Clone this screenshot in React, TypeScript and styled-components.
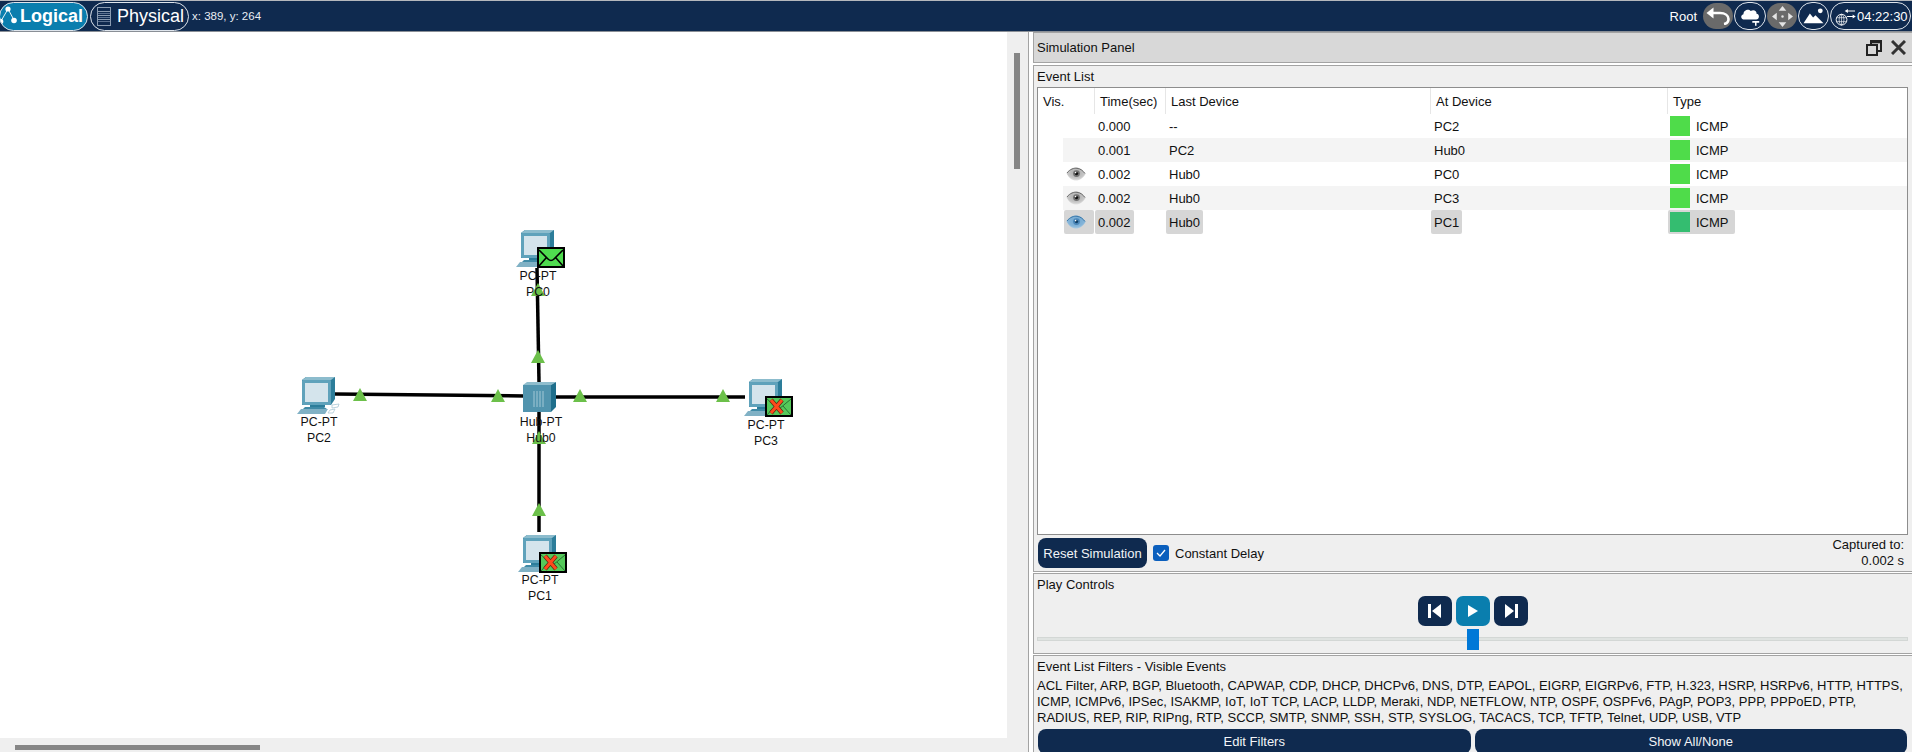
import React from 'react';
import styled, { createGlobalStyle } from 'styled-components';

const navy = '#0f2a4f';
const edge = '#a3a3a3';

const GlobalStyle = createGlobalStyle`
  html, body {
    margin: 0;
    padding: 0;
    background: #fff;
    overflow: hidden;
  }
  * { box-sizing: border-box; }
`;

const Page = styled.div`
  width: 1912px;
  height: 752px;
  display: flex;
  flex-direction: column;
  overflow: hidden;
  font-family: "Liberation Sans", Arial, sans-serif;
  font-size: 13px;
  color: #111;
`;

/* top bar */
const TopBar = styled.header`
  height: 32px;
  flex: none;
  display: flex;
  align-items: center;
  background: ${navy};
  border-top: 1px solid #b5b8bd;
  border-bottom: 1px solid #8a8f96;
  color: #fff;
`;

const ModeTab = styled.div<{ $active?: boolean }>`
  height: 29px;
  display: flex;
  align-items: center;
  border: 1px solid #dfe5ec;
  border-radius: 15px;
  font-size: 18px;
  font-weight: ${p => (p.$active ? 700 : 400)};
  background: ${p => (p.$active ? '#0a7eae' : 'transparent')};
  width: ${p => (p.$active ? '89px' : '99px')};
  margin-left: ${p => (p.$active ? '-1px' : '2px')};
  padding-left: ${p => (p.$active ? '0' : '6px')};
  gap: ${p => (p.$active ? '0' : '6px')};
  overflow: hidden;
`;

const Coords = styled.span`
  margin-left: 3px;
  font-size: 11.5px;
  color: #e8edf3;
`;

const TopRight = styled.div`
  margin-left: auto;
  display: flex;
  align-items: center;
  gap: 1px;
  padding-right: 1px;
`;

const RootLabel = styled.span`
  font-size: 13px;
  margin-right: 5px;
`;

const RoundButton = styled.div<{ $filled?: boolean; $w: number }>`
  width: ${p => p.$w}px;
  height: ${p => (p.$filled ? 26 : 28)}px;
  display: flex;
  align-items: center;
  justify-content: center;
  border-radius: 14px;
  background: ${p => (p.$filled ? '#6a6a6a' : 'transparent')};
  border: ${p => (p.$filled ? 'none' : '1px solid #dfe5ec')};
`;

const ClockButton = styled(RoundButton)`
  justify-content: flex-start;
  padding-left: 4px;
  gap: 1px;
  font-size: 13px;
`;

/* workspace */
const Main = styled.div`
  flex: 1;
  min-height: 0;
  display: flex;
`;

const LeftPane = styled.section`
  width: 1028px;
  flex: none;
  display: flex;
  flex-direction: column;
`;

const CanvasRow = styled.div`
  flex: 1;
  min-height: 0;
  display: flex;
`;

const Canvas = styled.div`
  position: relative;
  width: 1007px;
  flex: none;
  background: #fff;
`;

const Wires = styled.svg`
  position: absolute;
  left: 0;
  top: 0;
`;

const VScroll = styled.div`
  flex: 1;
  background: #efefef;
  padding: 21px 0 0 7px;
`;

const VThumb = styled.div`
  width: 6px;
  height: 116px;
  background: #868686;
`;

const HScroll = styled.div`
  height: 14px;
  flex: none;
  background: #efefef;
  padding: 7px 0 0 15px;
`;

const HThumb = styled.div`
  width: 245px;
  height: 5px;
  background: #868686;
`;

const Device = styled.div<{ $x: number; $y: number }>`
  position: absolute;
  left: ${p => p.$x - 50}px;
  top: ${p => p.$y}px;
  width: 100px;
  display: flex;
  flex-direction: column;
  align-items: center;
  font-size: 12.3px;
  line-height: 16px;
`;

const DeviceText = styled.span<{ $gap?: number }>`
  position: relative;
  margin-top: ${p => p.$gap ?? 0}px;
  color: #111;
`;

const EnvelopeSlot = styled.div`
  position: absolute;
  left: 49px;
  top: 17px;
  width: 28px;
  height: 21px;
`;

const HubDrawing = styled.svg`
  margin-right: 3px;
`;

/* simulation panel */
const Panel = styled.aside`
  flex: 1;
  display: flex;
  flex-direction: column;
  border-left: 1px solid ${edge};
  padding-left: 4px;
  background: #fff;
`;

const PanelHeader = styled.div`
  height: 31px;
  flex: none;
  display: flex;
  align-items: center;
  padding: 0 6px 0 3px;
  margin-bottom: 2px;
  background: #d8d8d8;
  border: 1px solid ${edge};
  border-right: none;
`;

const PanelTitle = styled.span`
  font-size: 13px;
  margin-right: auto;
`;

const HeaderIcons = styled.div`
  display: flex;
  align-items: center;
  gap: 9px;
`;

const Section = styled.div<{ $h: number }>`
  height: ${p => p.$h}px;
  flex: none;
  display: flex;
  flex-direction: column;
  margin-bottom: 1px;
  background: #efefef;
  border: 1px solid ${edge};
  border-right: none;
`;

const SectionLabel = styled.div`
  height: 21px;
  flex: none;
  display: flex;
  align-items: center;
  padding-left: 3px;
  line-height: 16px;
`;

const TableBox = styled.div`
  height: 448px;
  flex: none;
  margin: 0 4px 0 3px;
  background: #fff;
  border: 1px solid #8d8d8d;
`;

const TableHead = styled.div`
  height: 26px;
  display: grid;
  grid-template-columns: 56px 71px 265px 237px 1fr;
`;

const HeadCell = styled.div<{ $first?: boolean }>`
  display: flex;
  align-items: center;
  padding-left: 5px;
  border-left: ${p => (p.$first ? 'none' : '1px solid #e6e6e6')};
`;

const Row = styled.div<{ $alt?: boolean }>`
  height: 24px;
  margin-left: 25px;
  display: grid;
  grid-template-columns: 31px 71px 265px 237px 1fr;
  background: ${p => (p.$alt ? '#f4f4f4' : 'transparent')};
`;

const Cell = styled.div`
  display: flex;
  align-items: center;
`;

const CellPill = styled.span<{ $on?: boolean }>`
  height: 24px;
  display: inline-flex;
  align-items: center;
  margin-left: 1px;
  padding: 0 3px;
  border-radius: 2px;
  background: ${p => (p.$on ? '#d6d6d6' : 'transparent')};
`;

const EyePill = styled(CellPill)`
  width: 30px;
  padding: 0 0 0 2px;
`;

const Swatch = styled.span<{ $on?: boolean }>`
  width: 20px;
  height: 20px;
  margin: 0 6px 0 -1px;
  background: ${p => (p.$on ? '#34bd70' : '#4fdc4a')};
`;

const EventFooter = styled.div`
  flex: 1;
  display: flex;
  align-items: center;
  padding: 0 8px 0 4px;
`;

const NavyButton = styled.button<{ $grow?: boolean }>`
  height: ${p => (p.$grow ? '25px' : '30px')};
  flex: ${p => (p.$grow ? '1' : 'none')};
  width: ${p => (p.$grow ? 'auto' : '109px')};
  padding: 0;
  border: none;
  border-radius: 8px;
  background: ${navy};
  color: #f2f4f7;
  font-family: inherit;
  font-size: 13px;
`;

const CheckBox = styled.span`
  width: 16px;
  height: 16px;
  margin: 0 6px;
  display: inline-flex;
  align-items: center;
  justify-content: center;
  border-radius: 3px;
  background: #0b5fbd;
`;

const Captured = styled.div`
  margin-left: auto;
  text-align: right;
  line-height: 16px;
`;

const PlayRow = styled.div`
  display: flex;
  justify-content: center;
  gap: 4px;
  margin-top: 1px;
`;

const PlayButton = styled.div<{ $active?: boolean }>`
  width: 34px;
  height: 30px;
  display: flex;
  align-items: center;
  justify-content: center;
  border-radius: 7px;
  background: ${p => (p.$active ? '#0a7eae' : navy)};
`;

const SliderTrack = styled.div`
  position: relative;
  height: 4px;
  margin: 11px 4px 0 3px;
  background: #dfe3e1;
  border: 1px solid #d3d7d5;
`;

const SliderThumb = styled.div`
  position: absolute;
  left: calc(50% - 6px);
  top: -9px;
  width: 12px;
  height: 21px;
  background: #0078d7;
`;

const FilterText = styled.div`
  line-height: 16px;
  padding: 1px 0 0 3px;
  white-space: nowrap;
`;

const FilterButtons = styled.div`
  display: flex;
  gap: 4px;
  padding: 3px 5px 0 4px;
`;

/* drawings */
const PcIcon = () => (
  <svg width="44" height="37" viewBox="0 0 44 37">
    <path d="M5 3 L9 0 H38 V22 L34 28 H5 Z" fill="#2c7d9a" />
    <path d="M5 3 L9 0 H38 L34 3 Z" fill="#8cbccd" />
    <rect x="5" y="3" width="29" height="25" rx="1" fill="#5fa2bb" />
    <rect x="8" y="6" width="23" height="19" fill="#d4e4ec" />
    <rect x="13" y="28" width="15" height="2" fill="#2c7d9a" />
    <path d="M6 32 H30 L27 30 H8 Z" fill="#3f8aa6" />
    <path d="M0 37 L4 32 H31 L28 37 Z" fill="#80b1c5" />
    <path d="M35 28 L42 27 L41 30 L35 31 Z M33 33 L38 32 L36 36 L31 36 Z" fill="none" stroke="#a9c8d5" strokeWidth="0.8" />
  </svg>
);

const HubIcon = () => (
  <HubDrawing width="33" height="30" viewBox="0 0 33 30">
    <path d="M0 3 L4 0 H33 L28 3 Z" fill="#8fbdcd" />
    <path d="M28 3 L33 0 V25 L28 30 Z" fill="#1f6f8c" />
    <rect y="3" width="28" height="27" fill="#5194ae" />
    <path d="M11 9 V25 M14 9 V25 M17 9 V25 M20 9 V25" stroke="#a3c8d6" strokeWidth="1" />
  </HubDrawing>
);

const Envelope = ({ failed }: { failed?: boolean }) => (
  <svg width="28" height="21" viewBox="0 0 28 21">
    <rect x="1" y="1" width="26" height="19" fill={failed ? '#55c95a' : '#4fdc4f'} stroke="#000" strokeWidth="2" />
    {failed ? (
      <>
        <path d="M2 3 L14 13 L26 3 M2 19 L10 10 M26 19 L18 10" fill="none" stroke="#1d5b27" strokeWidth="0.8" />
        <path d="M6 4 L17 17 M17 4 L6 17" stroke="#5b2b14" strokeWidth="4.4" />
        <path d="M6 4 L17 17 M17 4 L6 17" stroke="#ff4a1c" strokeWidth="3" />
      </>
    ) : (
      <path d="M2 3 L11 12 Q14 15 17 12 L26 3 M2 19 L9 11 M26 19 L19 11" fill="none" stroke="#000" strokeWidth="1.6" />
    )}
  </svg>
);

const Eye = ({ blue }: { blue?: boolean }) => {
  const id = blue ? 'eyeBlue' : 'eyeGray';
  return (
    <svg width="20" height="14" viewBox="0 0 20 14">
      <defs>
        <radialGradient id={id} cx="0.5" cy="0.4" r="0.65">
          <stop offset="0" stopColor={blue ? '#6da5d0' : '#a8a8a8'} />
          <stop offset="0.65" stopColor={blue ? '#84b4d8' : '#c6c6c6'} />
          <stop offset="1" stopColor={blue ? '#b7d3e8' : '#ececec'} />
        </radialGradient>
      </defs>
      <path d="M0.5 6.5 C4 1.5 7 0.5 10 0.5 C14 0.5 17 3 19.5 7 C17 11 14 13.5 10 13.5 C6 13.5 3 11 0.5 6.5 Z" fill={`url(#${id})`} />
      <path d="M1 6 C4 2 8 1 11 1.3 C15 1.8 17 4 19 6.5" fill="none" stroke={blue ? '#3a77a8' : '#6a6a6a'} strokeWidth="1" />
      <circle cx="10.5" cy="6.6" r="3.4" fill={blue ? '#4a86b8' : '#717171'} />
      <circle cx="10.5" cy="6.6" r="1.7" fill={blue ? '#123f66' : '#111'} />
      <circle cx="9.6" cy="5.6" r="0.8" fill="#fff" />
    </svg>
  );
};

const LogicalIcon = () => (
  <svg width="20" height="22" viewBox="0 0 20 22" fill="#fff" stroke="#fff">
    <path d="M8 4 L1 16 M8 4 L14 15" fill="none" strokeWidth="0.9" />
    <circle cx="8" cy="4" r="2.6" stroke="none" />
    <circle cx="0.5" cy="16.5" r="2.8" stroke="none" />
    <circle cx="14" cy="15.5" r="2.8" stroke="none" />
  </svg>
);

const PhysicalIcon = () => (
  <svg width="14" height="19" viewBox="0 0 14 19" fill="none" stroke="#8b9cb1">
    <rect x="0.5" y="0.5" width="13" height="18" />
    <path d="M1 4.5 H13 M1 8.5 H13 M1 12.5 H13" />
    <path d="M1 6.5 H13 M1 10.5 H13 M1 14.5 H13" stroke="#5b7190" />
  </svg>
);

const UndoIcon = () => (
  <svg width="24" height="18" viewBox="0 0 24 18" fill="none" stroke="#fff" strokeWidth="2.6">
    <path d="M5 6 H14 C19 6 22.5 8.5 22.5 12 C22.5 14.5 21 16.5 18 17" />
    <path d="M0.5 6 L7.5 0.5 V11.5 Z" fill="#fff" stroke="none" />
  </svg>
);

const CloudIcon = () => (
  <svg width="20" height="19" viewBox="0 0 26 24" fill="#fff">
    <path d="M6 16 C1 16 0 10 4.5 9 C4.5 4 11 1.5 14 5 C17 2.5 22 4 21.5 8.5 C26 9 25.5 16 21 16 Z" />
    <path d="M16 18 H25 V20 H21.5 V24 H19.5 V20 H16 Z" />
  </svg>
);

const MoveIcon = () => (
  <svg width="21" height="21" viewBox="0 0 22 22" fill="#e4e4e4">
    <path d="M11 0 L15 5 H7 Z M11 22 L15 17 H7 Z M0 11 L5 7 V15 Z M22 11 L17 7 V15 Z" />
    <circle cx="11" cy="11" r="1.3" />
  </svg>
);

const PictureIcon = () => (
  <svg width="21" height="16" viewBox="0 0 25 20" fill="#fff">
    <path d="M0 19 L8 7 L12 12 L15 9 L25 19 Z" />
    <circle cx="21" cy="3.5" r="3" />
  </svg>
);

const GlobeIcon = () => (
  <svg width="21" height="19" viewBox="0 0 26 24" fill="none" stroke="#fff">
    <circle cx="8" cy="16" r="6.8" strokeWidth="1.2" />
    <ellipse cx="8" cy="16" rx="3" ry="6.8" strokeWidth="0.8" />
    <path d="M1.5 13.5 H14.5 M1.5 18.5 H14.5 M8 9 V23" strokeWidth="0.8" />
    <path d="M15 5 H25 M15 12 H24" strokeWidth="1.4" />
    <path d="M12 5 L16 2.5 V7.5 Z M26 12 L22 9.5 V14.5 Z" fill="#fff" stroke="none" />
  </svg>
);

const RestoreIcon = () => (
  <svg width="16" height="16" viewBox="0 0 16 16" fill="none" stroke="#222" strokeWidth="2">
    <rect x="1" y="5" width="10" height="10" />
    <path d="M5 4 V1 H15 V11 H12" />
    <path d="M5 2.5 H15" strokeWidth="1.6" />
  </svg>
);

const CloseIcon = () => (
  <svg width="15" height="15" viewBox="0 0 15 15" stroke="#333" strokeWidth="3">
    <path d="M1 1 L14 14 M14 1 L1 14" />
  </svg>
);

const SkipBack = () => (
  <svg width="16" height="16" viewBox="0 0 16 16" fill="#fff">
    <rect x="1" y="1" width="3" height="14" />
    <path d="M14 1 V15 L5 8 Z" />
  </svg>
);

const PlayGlyph = () => (
  <svg width="10" height="12" viewBox="0 0 10 12" fill="#fff">
    <path d="M0 0 L10 6 L0 12 Z" />
  </svg>
);

const SkipForward = () => (
  <svg width="16" height="16" viewBox="0 0 16 16" fill="#fff">
    <rect x="12" y="1" width="3" height="14" />
    <path d="M2 1 V15 L11 8 Z" />
  </svg>
);

const wires = [
  [537, 236, 539, 350],
  [335, 362, 525, 364],
  [556, 365, 745, 365],
  [539, 380, 539, 500],
];

// arrow markers on the links, canvas coordinates of the tip
const markers = [
  [538, 251], [538, 318], [360, 356], [498, 357],
  [580, 357], [723, 357], [539, 399], [539, 471],
];

const events = [
  { time: '0.000', last: '--', at: 'PC2' },
  { time: '0.001', last: 'PC2', at: 'Hub0' },
  { time: '0.002', last: 'Hub0', at: 'PC0', eye: 'gray' },
  { time: '0.002', last: 'Hub0', at: 'PC3', eye: 'gray' },
  { time: '0.002', last: 'Hub0', at: 'PC1', eye: 'blue', on: true },
];

const filterLines = [
  'ACL Filter, ARP, BGP, Bluetooth, CAPWAP, CDP, DHCP, DHCPv6, DNS, DTP, EAPOL, EIGRP, EIGRPv6, FTP, H.323, HSRP, HSRPv6, HTTP, HTTPS,',
  'ICMP, ICMPv6, IPSec, ISAKMP, IoT, IoT TCP, LACP, LLDP, Meraki, NDP, NETFLOW, NTP, OSPF, OSPFv6, PAgP, POP3, PPP, PPPoED, PTP,',
  'RADIUS, REP, RIP, RIPng, RTP, SCCP, SMTP, SNMP, SSH, STP, SYSLOG, TACACS, TCP, TFTP, Telnet, UDP, USB, VTP',
];

const App: React.FC = () => {
  return (
    <Page>
      <GlobalStyle />
      <TopBar>
        <ModeTab $active>
          <LogicalIcon />
          Logical
        </ModeTab>
        <ModeTab>
          <PhysicalIcon />
          Physical
        </ModeTab>
        <Coords>x: 389, y: 264</Coords>
        <TopRight>
          <RootLabel>Root</RootLabel>
          <RoundButton $filled $w={30}><UndoIcon /></RoundButton>
          <RoundButton $w={32}><CloudIcon /></RoundButton>
          <RoundButton $filled $w={30}><MoveIcon /></RoundButton>
          <RoundButton $w={31}><PictureIcon /></RoundButton>
          <ClockButton $w={81}><GlobeIcon />04:22:30</ClockButton>
        </TopRight>
      </TopBar>

      <Main>
        <LeftPane>
          <CanvasRow>
            <Canvas>
              <Wires width="1007" height="706">
                {wires.map(([x1, y1, x2, y2]) => (
                  <line key={`${x1}-${y1}`} x1={x1} y1={y1} x2={x2} y2={y2} stroke="#000" strokeWidth="3.5" />
                ))}
                {markers.map(([x, y]) => (
                  <path key={`${x}-${y}`} d={`M${x} ${y} l7 13 h-14 Z`} fill="#6cc04a" />
                ))}
              </Wires>
              <Device $x={538} $y={198}>
                <PcIcon />
                <EnvelopeSlot><Envelope /></EnvelopeSlot>
                <DeviceText $gap={1}>PC-PT</DeviceText>
                <DeviceText>PC0</DeviceText>
              </Device>
              <Device $x={319} $y={345}>
                <PcIcon />
                <DeviceText>PC-PT</DeviceText>
                <DeviceText>PC2</DeviceText>
              </Device>
              <Device $x={541} $y={350}>
                <HubIcon />
                <DeviceText $gap={2}>Hub-PT</DeviceText>
                <DeviceText>Hub0</DeviceText>
              </Device>
              <Device $x={766} $y={347}>
                <PcIcon />
                <EnvelopeSlot><Envelope failed /></EnvelopeSlot>
                <DeviceText $gap={1}>PC-PT</DeviceText>
                <DeviceText>PC3</DeviceText>
              </Device>
              <Device $x={540} $y={503}>
                <PcIcon />
                <EnvelopeSlot><Envelope failed /></EnvelopeSlot>
                <DeviceText>PC-PT</DeviceText>
                <DeviceText>PC1</DeviceText>
              </Device>
            </Canvas>
            <VScroll><VThumb /></VScroll>
          </CanvasRow>
          <HScroll><HThumb /></HScroll>
        </LeftPane>

        <Panel>
          <PanelHeader>
            <PanelTitle>Simulation Panel</PanelTitle>
            <HeaderIcons>
              <RestoreIcon />
              <CloseIcon />
            </HeaderIcons>
          </PanelHeader>

          <Section $h={507}>
            <SectionLabel>Event List</SectionLabel>
            <TableBox>
              <TableHead>
                <HeadCell $first>Vis.</HeadCell>
                <HeadCell>Time(sec)</HeadCell>
                <HeadCell>Last Device</HeadCell>
                <HeadCell>At Device</HeadCell>
                <HeadCell>Type</HeadCell>
              </TableHead>
              {events.map((ev, i) => (
                <Row key={ev.at} $alt={i % 2 === 1}>
                  <Cell>
                    <EyePill $on={ev.on}>
                      {ev.eye && <Eye blue={ev.eye === 'blue'} />}
                    </EyePill>
                  </Cell>
                  <Cell><CellPill $on={ev.on}>{ev.time}</CellPill></Cell>
                  <Cell><CellPill $on={ev.on}>{ev.last}</CellPill></Cell>
                  <Cell><CellPill $on={ev.on}>{ev.at}</CellPill></Cell>
                  <Cell>
                    <CellPill $on={ev.on}>
                      <Swatch $on={ev.on} />
                      ICMP&nbsp;
                    </CellPill>
                  </Cell>
                </Row>
              ))}
            </TableBox>
            <EventFooter>
              <NavyButton>Reset Simulation</NavyButton>
              <CheckBox>
                <svg width="10" height="8" viewBox="0 0 10 8" fill="none" stroke="#fff" strokeWidth="1.3">
                  <path d="M1 4 L4 7 L9 1" />
                </svg>
              </CheckBox>
              Constant Delay
              <Captured>
                Captured to:
                <br />
                0.002 s
              </Captured>
            </EventFooter>
          </Section>

          <Section $h={81}>
            <SectionLabel>Play Controls</SectionLabel>
            <PlayRow>
              <PlayButton><SkipBack /></PlayButton>
              <PlayButton $active><PlayGlyph /></PlayButton>
              <PlayButton><SkipForward /></PlayButton>
            </PlayRow>
            <SliderTrack>
              <SliderThumb />
            </SliderTrack>
          </Section>

          <Section $h={98}>
            <SectionLabel>Event List Filters - Visible Events</SectionLabel>
            <FilterText>
              {filterLines.map(line => (
                <div key={line}>{line}</div>
              ))}
            </FilterText>
            <FilterButtons>
              <NavyButton $grow>Edit Filters</NavyButton>
              <NavyButton $grow>Show All/None</NavyButton>
            </FilterButtons>
          </Section>
        </Panel>
      </Main>
    </Page>
  );
};

export default App;
